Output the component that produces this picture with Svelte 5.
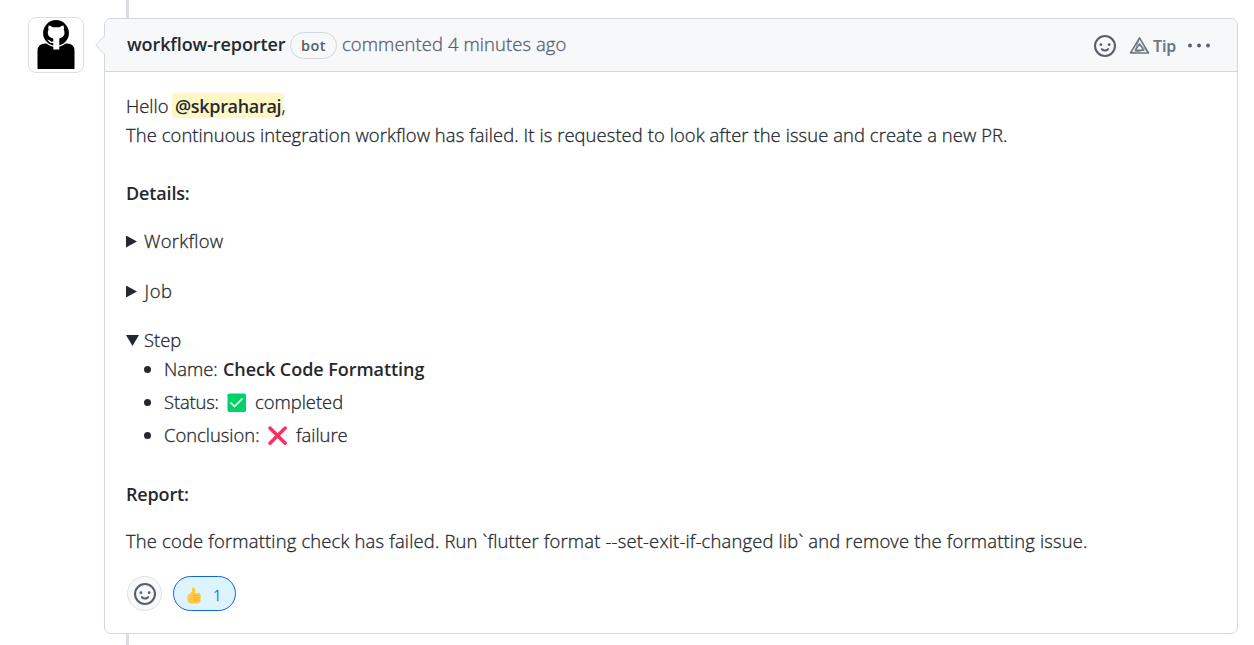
<script>
  const steps = [
    { label: 'Name:', kind: 'name' },
    { label: 'Status:', kind: 'ok' },
    { label: 'Conclusion:', kind: 'fail' }
  ];
</script>

{#snippet smiley()}
  <svg class="smiley" viewBox="0 0 16 16" width="22" height="22" fill="#57606a">
    <path fill-rule="evenodd" d="M1.5 8a6.5 6.5 0 1 1 13 0 6.5 6.5 0 0 1-13 0ZM8 0a8 8 0 1 0 0 16A8 8 0 0 0 8 0ZM5 8a1 1 0 1 0 0-2 1 1 0 0 0 0 2Zm7-1a1 1 0 1 1-2 0 1 1 0 0 1 2 0ZM5.32 9.636a.75.75 0 0 1 1.038.175l.007.009c.103.118.22.222.35.31.264.178.683.37 1.285.37.602 0 1.02-.192 1.285-.371.13-.088.247-.192.35-.31l.007-.008a.75.75 0 0 1 1.222.87l-.614-.431c.614.43.614.431.613.431v.001l-.001.002-.002.003-.005.007-.014.019a1.984 1.984 0 0 1-.184.213c-.16.166-.338.316-.53.445-.63.418-1.37.638-2.127.629-.946 0-1.652-.308-2.126-.63a3.331 3.331 0 0 1-.715-.657l-.014-.02-.005-.006-.002-.003v-.002h-.001l.613-.432-.614.43a.75.75 0 0 1 .183-1.044Z" />
  </svg>
{/snippet}

<div class="page">
  <div class="avatar">
    <svg viewBox="0 0 54 54" width="54" height="54">
      <path d="M8.500 51V33q0-7.500 8-7.500h21.500q7.500 0 7.500 7.500V51Z" />
      <circle cx="27" cy="15" r="14" fill="#fff" />
      <circle cx="27" cy="15" r="12.900" />
      <path fill="#fff" d="M19.700 7.400q2.200.2 4 1.800h6.800q1.800-1.600 4-1.800q.9 2.200.2 4.300q1.100 1.700.8 3.900q-.8 4.200-5.200 4.900V31.500h-6V25.200q-3.400.2-4.400-1.600q-.8-1.400-1.900-1.900q2-.3 3.200 1.300q1 1 3.100.6V20.500q-4.700-.7-5.500-4.900q-.3-2.200.8-3.900q-.7-2.100.1-4.300Z" />
    </svg>
  </div>
  <div class="timeline">
    <div class="rail top"></div>
    <article class="card">
      <svg class="caret" viewBox="0 0 10 20" width="10" height="20">
        <path d="M10 .5 .7 10 10 19.500" fill="#f6f8fa" stroke="#d0d7de" />
      </svg>
      <header>
        <strong class="author">workflow-reporter</strong>
        <span class="bot">bot</span>
        <span class="when text">commented 4 minutes ago</span>
        <div class="actions">
          {@render smiley()}
          <span class="tip">
            <svg viewBox="0 0 22 18" width="22" height="18" fill="none" stroke="#6e7781" stroke-linejoin="round">
              <path stroke-width="1.500" d="M10.500 1 19.500 16H1.500Z" />
              <path stroke-width="1.400" d="M10.500 6.800 14.700 13.300H6.300Z" />
              <path stroke-width=".9" d="M10.500 1 6.300 13.300M1.500 16 14.700 13.300M19.500 16 10.500 6.800" />
            </svg>
            <b>Tip</b>
          </span>
          <svg class="dots" viewBox="0 0 23 6" width="23" height="6" fill="#57606a">
            <circle cx="2" cy="2.500" r="1.900" /><circle cx="11" cy="2.500" r="1.900" /><circle cx="20" cy="2.500" r="1.900" />
          </svg>
        </div>
      </header>
      <div class="body">
        <p class="greet"><span class="hello text">Hello</span><strong class="mention">@skpraharaj</strong><span class="comma text">,</span></p>
        <p><span class="intro text">The continuous integration workflow has failed. It is requested to look after the issue and create a new PR.</span></p>
        <h4 class="details"><span>Details:</span></h4>
        <div class="fold wf"><i class="right"></i><span class="wft text">Workflow</span></div>
        <div class="fold job"><i class="right"></i><span class="jobt text">Job</span></div>
        <div class="fold step"><i class="down"></i><span class="text">Step</span></div>
        <ul>
          {#each steps as s}
            <li>
              <span class="label text {s.kind}">{s.label}</span>
              {#if s.kind === 'name'}
                <strong class="check">Check Code Formatting</strong>
              {:else if s.kind === 'ok'}
                <svg viewBox="0 0 20 20" width="20" height="20">
                  <rect x=".5" y=".5" width="18.500" height="18.500" rx="1.800" fill="#00d26a" />
                  <path d="M4 10 7.500 13.500 15 6" fill="none" stroke="#fff" stroke-width="1.700" stroke-linecap="round" stroke-linejoin="round" />
                </svg>
                <span class="text">completed</span>
              {:else}
                <svg viewBox="0 0 20 20" width="20" height="20">
                  <path d="M2 2 17.200 17.200M17.200 2 2 17.200" stroke="#f92f60" stroke-width="3.400" stroke-linecap="round" />
                </svg>
                <span class="text">failure</span>
              {/if}
            </li>
          {/each}
        </ul>
        <h4 class="report"><span>Report:</span></h4>
        <p class="last"><span class="outro text">The code formatting check has failed. Run `flutter format --set-exit-if-changed lib` and remove the formatting issue.</span></p>
        <div class="reactions">
          <span class="add">{@render smiley()}</span>
          <span class="thumb">
            <svg viewBox="0 0 14 17" width="14" height="17">
              <path fill="#ffc83d" d="M5.200 1Q5.400.3 6.500.4q2 .3 2 3.100L8.200 6H12q1.600.2 1.500 1.600v6.200q-.3 2.500-3 2.700H4.500Q.7 16.200.5 12.500V9.500Q.8 7.800 2.500 7L4 5.600Q5.500 4 5.200 1Z" />
              <path fill="none" stroke="#f9a82f" stroke-width=".7" d="M7.200 8.200V15M7.500 8.500h5.800M7.500 10.800h5.800M7.500 13h5.600" />
            </svg>
            <span class="one">1</span>
          </span>
        </div>
      </div>
    </article>
    <div class="rail bottom"></div>
  </div>
</div>

<style>
  :global(body) { background: #fff; overflow: hidden; }
  .page {
    display: flex;
    align-items: flex-start;
    width: 1254px;
    height: 645px;
    box-sizing: border-box;
    padding-left: 28px;
    font-family: "Open Sans", "Noto Sans", sans-serif;
    font-size: 18.400px;
    font-weight: 300;
    -webkit-text-stroke: .3px;
    line-height: 29px;
    color: #24292f;
  }
  strong, b, h4, .bot { -webkit-text-stroke: 0; }
  strong, h4 { font-size: 18px; font-weight: 600; }
  .text { display: block; line-height: 27px; padding-bottom: 2px; }
  .avatar {
    width: 54px;
    height: 54px;
    margin: 17px 20px 0 0;
    border: 1px solid #dcdfe3;
    border-radius: 8px;
    overflow: hidden;
  }
  .avatar svg { display: block; }
  .timeline { display: flex; flex-direction: column; width: 1134px; height: 645px; }
  .rail { width: 3px; margin-left: 22px; background: #d8dee4; }
  .top { height: 18px; }
  .bottom { flex: 1; }
  .card {
    position: relative;
    box-sizing: border-box;
    height: 616px;
    border: 1px solid #d0d7de;
    border-radius: 7px;
    background: #fff;
  }
  .caret { position: absolute; left: -10px; top: 16px; }
  header {
    display: flex;
    align-items: center;
    height: 52px;
    padding-left: 22px;
    background: #f6f8fa;
    border-bottom: 1px solid #d0d7de;
    border-radius: 6px 6px 0 0;
    white-space: nowrap;
  }
  .author { width: 163px; letter-spacing: -.1px; margin-top: -1px; }
  .bot {
    box-sizing: border-box;
    width: 47px;
    height: 27px;
    border: 1px solid #d0d7de;
    border-radius: 14px;
    font-size: 14.500px;
    font-weight: 600;
    line-height: 25px;
    letter-spacing: .4px;
    text-align: center;
    color: #57606a;
  }
  .when { margin: -1px 0 0 5px; color: #57606a; letter-spacing: .1px; }
  .actions { display: flex; align-items: center; margin: 2px 26px 0 auto; }
  .smiley { display: block; }
  .tip { display: flex; align-items: center; gap: 2px; margin: 0 12px 0 13px; color: #6e7781; }
  .tip b { font-family: "Noto Sans", sans-serif; font-size: 16px; font-weight: 600; width: 23px; letter-spacing: -.2px; }
  .body { padding: 20px 21px 0; white-space: nowrap; }
  p, h4 { margin: 0; height: 29px; }
  h4 { letter-spacing: -.15px; }
  .greet { display: flex; }
  .hello { width: 46px; }
  .mention {
    box-sizing: border-box;
    height: 25px;
    margin-top: 1px;
    width: 112px;
    padding-left: 3px;
    background: #fff8c5;
    border-radius: 3px;
    line-height: 27px;
    letter-spacing: -.32px;
  }
  .comma { margin-left: -2.500px; }
  .intro { letter-spacing: .083px; }
  .outro { letter-spacing: .178px; }
  .wft { letter-spacing: .3px; }
  .jobt { letter-spacing: .6px; padding-left: .5px; }
  .check { letter-spacing: -.05px; }
  .details { margin-top: 29px; }
  .fold { display: flex; align-items: center; }
  .fold i { width: 18px; height: 29px; display: flex; align-items: center; }
  .fold i::before { content: ''; background: #24292f; }
  .right::before { width: 11px; height: 12px; clip-path: polygon(0 0, 100% 50%, 0 100%); }
  .down::before { width: 13px; height: 11px; clip-path: polygon(0 0, 100% 0, 50% 100%); }
  .wf { margin-top: 19px; }
  .job { margin-top: 21px; }
  .step { margin-top: 20px; }
  ul { list-style: none; margin: 0; padding: 0 0 0 18px; display: flex; flex-direction: column; gap: 4px; }
  li { display: flex; align-items: center; height: 29px; }
  li::before { content: ''; width: 7px; height: 7px; border-radius: 50%; background: #24292f; margin-right: 13px; }
  .label.name { width: 59px; }
  .label.ok { width: 63px; letter-spacing: -.15px; }
  .label.fail { width: 104px; }
  li svg { margin: 1px 8px 0 0; }
  .report { margin-top: 30px; }
  .last { margin-top: 18px; }
  .reactions { display: flex; margin: 20px 0 0 1px; gap: 11px; }
  .add, .thumb { box-sizing: border-box; height: 35px; border-radius: 18px; display: flex; align-items: center; }
  .add { width: 35px; justify-content: center; border: 1px solid #dfe3e8; background: #f6f8fa; }
  .thumb { width: 63px; padding: 3px 0 0 13px; border: 1px solid #0969da; background: #ddf4ff; }
  .one { margin-left: 12px; font-size: 15px; color: #0969da; }
</style>
